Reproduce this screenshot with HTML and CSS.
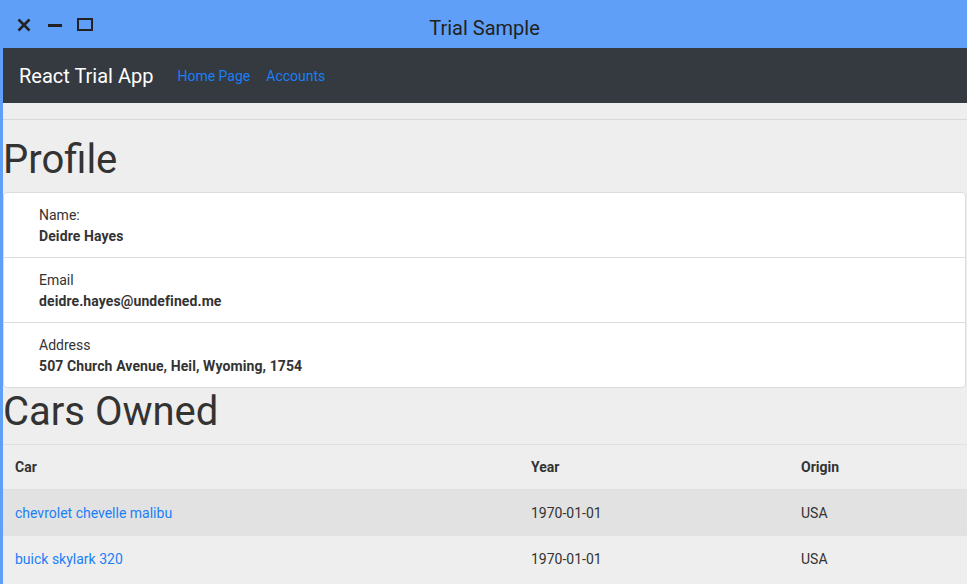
FILE: index.html
```html
<!DOCTYPE html>
<html>
<head>
<meta charset="utf-8">
<title>Trial Sample</title>
<link rel="stylesheet" href="styles.css">
</head>
<body>
<div class="app">
  <div class="titlebar">
    <div class="controls">
      <svg class="ctl ctl-close" width="14" height="14" viewBox="0 0 14 14"><path d="M1.5 1.5 L12.5 12.5 M12.5 1.5 L1.5 12.5" stroke="#222" stroke-width="2.6" fill="none"/></svg>
      <svg class="ctl ctl-min" width="16" height="14" viewBox="0 0 16 14"><rect x="1" y="6" width="14" height="3" fill="#222"/></svg>
      <svg class="ctl ctl-max" width="16" height="14" viewBox="0 0 16 14"><rect x="1" y="1" width="14" height="11" stroke="#222" stroke-width="2" fill="none"/></svg>
    </div>
    <div class="title">Trial Sample</div>
  </div>
  <div class="frame">
    <nav class="navbar">
      <span class="brand">React Trial App</span>
      <a class="nav-link" href="#">Home Page</a>
      <a class="nav-link" href="#">Accounts</a>
    </nav>
    <main class="content">
      <hr class="rule">
      <h1 class="heading">Profile</h1>
      <ul class="card">
        <li class="item">
          <div class="label">Name:</div>
          <div class="value">Deidre Hayes</div>
        </li>
        <li class="item">
          <div class="label">Email</div>
          <div class="value">deidre.hayes@undefined.me</div>
        </li>
        <li class="item">
          <div class="label">Address</div>
          <div class="value">507 Church Avenue, Heil, Wyoming, 1754</div>
        </li>
      </ul>
      <h1 class="heading heading-cars">Cars Owned</h1>
      <table class="cars">
        <thead>
          <tr><th class="c-car">Car</th><th class="c-year">Year</th><th class="c-origin">Origin</th></tr>
        </thead>
        <tbody>
          <tr class="striped"><td><a href="#">chevrolet chevelle malibu</a></td><td>1970-01-01</td><td>USA</td></tr>
          <tr><td><a href="#">buick skylark 320</a></td><td>1970-01-01</td><td>USA</td></tr>
        </tbody>
      </table>
    </main>
  </div>
</div>
</body>
</html>
```
FILE: styles.css
```css
* { box-sizing: border-box; }
html, body { margin: 0; padding: 0; height: 100%; }
body {
  font-family: Roboto, "Liberation Sans", sans-serif;
  color: #333;
  background: #eeeeee;
  overflow: hidden;
}
.app { display: flex; flex-direction: column; height: 100%; }
.titlebar {
  height: 48px;
  flex: none;
  background: #609ff7;
  display: flex;
  align-items: center;
  position: relative;
}
.controls {
  display: flex;
  align-items: center;
  padding-left: 17px;
  margin-top: 1px;
}
.ctl { display: block; }
.ctl-min { margin-left: 16px; }
.ctl-max { margin-left: 14px; }
.title {
  position: absolute;
  left: 0; right: 0; top: 0;
  text-align: center;
  font-size: 20px;
  color: #222;
  padding-left: 2px;
  padding-top: 8px;
  line-height: 40px;
}
.frame {
  flex: 1;
  border-left: 3px solid #609ff7;
  display: flex;
  flex-direction: column;
}
.navbar {
  height: 55px;
  background: #343a40;
  display: flex;
  align-items: center;
  padding: 0 16px;
  flex: none;
}
.brand {
  color: #fff;
  font-size: 20px;
  margin-right: 16px;
  padding-top: 1px;
}
.nav-link {
  color: #1a7ff7;
  text-decoration: none;
  font-size: 14px;
  padding: 0 8px;
}
.content { flex: 1; background: #eeeeee; }
.rule {
  margin: 16px 0 0;
  border: 0;
  border-top: 1px solid #d8d8d8;
}
.heading {
  margin: 16px 0 8px;
  font-size: 40px;
  font-weight: 400;
  line-height: 48px;
  color: #333;
}
.heading-cars { margin-top: 0; }
.card {
  list-style: none;
  margin: 0 1px 0 0;
  padding: 0;
  background: #fff;
  border: 1px solid #dcdcdc;
  border-radius: 4px;
}
.item {
  padding: 12px 20px 10px 35px;
  font-size: 14px;
  line-height: 21px;
  border-top: 1px solid #dcdcdc;
}
.item:first-child { border-top: 0; }
.label { color: #333; }
.value { font-weight: 700; color: #333; letter-spacing: 0.1px; }
.cars {
  width: 100%;
  border-collapse: collapse;
  font-size: 14px;
  line-height: 21px;
}
.cars th, .cars td {
  text-align: left;
  padding: 12px 12px 11px;
  border-top: 1px solid #e0e0e0;
}
.cars td { padding-top: 13px; }
.cars th { font-weight: 700; color: #333; }
.cars td { color: #333; }
.c-car { width: 516px; }
.c-year { width: 270px; }
.cars a { color: #1a7ff7; text-decoration: none; }
.striped td { background: #e2e2e2; }
```
